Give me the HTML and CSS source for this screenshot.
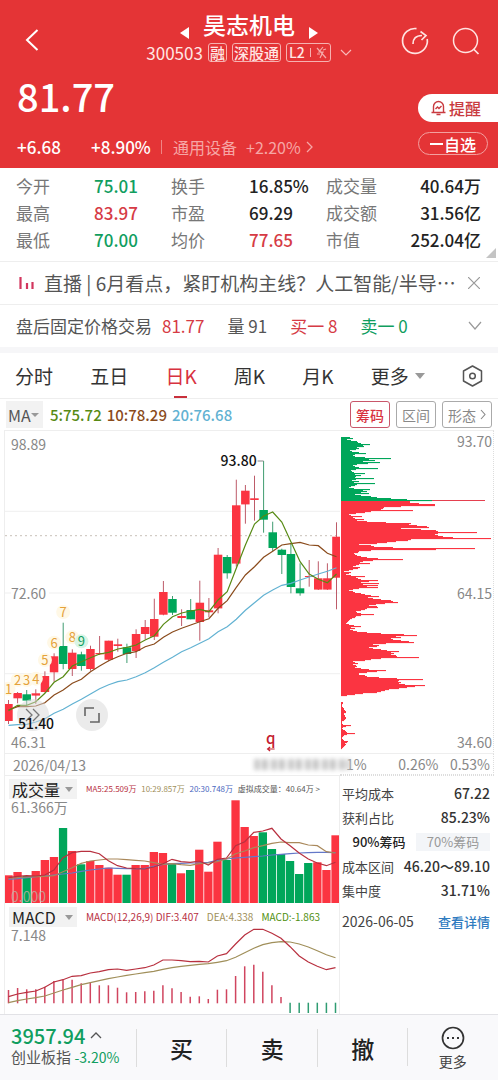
FILE: index.html
```
<!DOCTYPE html>
<html lang="zh-CN">
<head>
<meta charset="utf-8">
<meta name="viewport" content="width=device-width, initial-scale=1">
<title>昊志机电 300503</title>
<link rel="stylesheet" href="styles.css">
</head>
<body>
<div class="app">
  <header class="hero">
    <div class="topbar">
      <button class="icon-btn back" aria-label="返回"><svg width="14" height="24" viewBox="0 0 14 24"><path d="M12.500 2 2 12l10.500 10" fill="none" stroke="#fff" stroke-width="2"/></svg></button>
      <div class="title-block">
        <div class="title-row">
          <button class="icon-btn step" aria-label="上一只"><svg width="9" height="12" viewBox="0 0 9 12"><path d="M9 0v12L0 6z" fill="#fff"/></svg></button>
          <h1 class="title">昊志机电</h1>
          <button class="icon-btn step" aria-label="下一只"><svg width="9" height="12" viewBox="0 0 9 12"><path d="M0 0v12l9-6z" fill="#fff"/></svg></button>
        </div>
        <div class="code-row">
          <span class="code">300503</span>
          <span class="badge">融</span>
          <span class="badge">深股通</span>
          <span class="badge badge-l2">L2<i class="badge-sep"></i><svg width="11" height="13" viewBox="0 0 11 13"><path d="M7 1 3 6h4l-3 6M1 2l9 10M1 8h3M7 4l3-1" fill="none" stroke="#f5a9a9" stroke-width="1.200"/></svg></span>
          <svg width="12" height="7" viewBox="0 0 12 7"><path d="m1 1 5 5 5-5" fill="none" stroke="#f8b9b9" stroke-width="1.200"/></svg>
        </div>
      </div>
      <div class="top-actions">
        <button class="icon-btn" aria-label="分享"><svg width="28" height="28" viewBox="0 0 28 28"><path d="M15.500 1.600A12.400 12.400 0 1 0 26.200 12M12 17c0-5 2.500-8.500 9-8.500M19.500 4.500l5.500 4-4.500 4.500" fill="none" stroke="#ffe3e1" stroke-width="1.700"/></svg></button>
        <button class="icon-btn" aria-label="搜索"><svg width="28" height="28" viewBox="0 0 28 28"><circle cx="13.500" cy="13.500" r="12" fill="none" stroke="#ffe3e1" stroke-width="1.500"/><path d="m21.500 22 5 5" stroke="#ffe3e1" stroke-width="1.700"/></svg></button>
      </div>
    </div>
    <div class="quote">
      <div class="quote-main">
        <div class="price">81.77</div>
        <div class="change-row">
          <span class="delta">+6.68</span><span class="percent">+8.90%</span>
          <a class="sector" href="#sector"><span>通用设备</span><span>+2.20%</span><svg width="7" height="12" viewBox="0 0 7 12"><path d="m1 1 5 5-5 5" fill="none" stroke="#f6a6a5" stroke-width="1.300"/></svg></a>
        </div>
      </div>
      <div class="quote-actions">
        <button class="remind"><svg width="15" height="16" viewBox="0 0 15 16"><path d="M2.500 12V6.500a5 5 0 0 1 10 0V12M.500 12.500h14M5.500 14.500h4M4.500 9l2-2 1.500 1.500L10.500 6" fill="none" stroke="#c93b40" stroke-width="1.400"/></svg>提醒</button>
        <button class="watch"><i class="minus"></i>自选</button>
      </div>
    </div>
  </header>

  <dl class="stats">
    <div><dt>今开</dt><dd class="down">75.01</dd></div><div><dt>换手</dt><dd>16.85%</dd></div><div class="wide"><dt>成交量</dt><dd>40.64万</dd></div>
    <div><dt>最高</dt><dd class="up">83.97</dd></div><div><dt>市盈</dt><dd>69.29</dd></div><div class="wide"><dt>成交额</dt><dd>31.56亿</dd></div>
    <div><dt>最低</dt><dd class="down">70.00</dd></div><div><dt>均价</dt><dd class="up">77.65</dd></div><div class="wide"><dt>市值</dt><dd>252.04亿</dd></div>
  </dl>

  <div class="news">
    <svg width="16" height="12" viewBox="0 0 16 12"><path d="M1.500 0v12M8 6v6M13.500 5v7" stroke="#d2365e" stroke-width="2.200"/></svg>
    <a class="news-text" href="#live">直播 | 6月看点，紧盯机构主线？人工智能/半导…</a>
    <button class="icon-btn" aria-label="关闭"><svg width="12" height="12" viewBox="0 0 12 12"><path d="m0 0 12 12M12 0 0 12" stroke="#999" stroke-width="1.200"/></svg></button>
  </div>
  <div class="after-hours">
    <span>盘后固定价格交易</span><span class="up ah-price">81.77</span><span class="ah-vol">量 91</span><span class="up ah-buy">买一 8</span><span class="down">卖一 0</span>
    <button class="icon-btn ah-more" aria-label="展开"><svg width="14" height="9" viewBox="0 0 14 9"><path d="m1 1 6 7 6-7" fill="none" stroke="#999" stroke-width="1.200"/></svg></button>
  </div>

  <nav class="tabs">
    <button>分时</button><button>五日</button><button class="active">日K</button><button>周K</button><button>月K</button><button class="tab-more">更多<i class="caret"></i></button>
    <button class="tab-set" aria-label="设置"><svg width="21" height="22" viewBox="0 0 21 22"><path d="M10.500 1 19.500 6v10l-9 5-9-5V6z" fill="none" stroke="#555" stroke-width="1.500" stroke-linejoin="round"/><circle cx="10.500" cy="11" r="2.800" fill="none" stroke="#555" stroke-width="1.500"/></svg></button>
  </nav>

  <div class="ma-row">
    <button class="ma-pick">MA<i class="caret small"></i></button>
    <span class="ma5">5:75.72</span><span class="ma10">10:78.29</span><span class="ma20">20:76.68</span>
    <div class="ma-tools"><button class="selected">筹码</button><button>区间</button><button>形态<svg width="6" height="11" viewBox="0 0 6 11"><path d="m1 1 4 4.500-4 4.500" fill="none" stroke="#888" stroke-width="1.100"/></svg></button></div>
  </div>

  <main class="charts">
    <section class="kline">
      <svg class="plot" id="kline"></svg>
      <span class="axis axis-high">98.89</span><span class="axis axis-mid">72.60</span><span class="axis axis-low">46.31</span>
      <button class="round-btn skip" aria-label="前进"><svg width="16" height="14" viewBox="0 0 16 14"><path d="m1 1 6 6-6 6M8 1l6 6-6 6" fill="none" stroke="#777" stroke-width="1.300"/></svg></button>
      <span class="low-label">51.40</span>
      <button class="round-btn expand" aria-label="全屏"><svg width="16" height="16" viewBox="0 0 16 16"><path d="M1 9V1h9M15 6v9H6" fill="none" stroke="#666" stroke-width="1.600"/></svg></button>
    </section>
    <section class="chips">
      <svg class="plot" id="chips"></svg>
      <span class="axis axis-high">93.70</span><span class="axis axis-mid">64.15</span><span class="axis axis-low">34.60</span>
    </section>
    <div class="date-row"><span>2026/04/13</span><i class="smear"></i></div>
    <div class="scale-row"><span>1%</span><span>0.26%</span><span>0.53%</span></div>
    <div class="indicators">
      <section class="volume">
        <svg class="plot" id="volume"></svg>
        <div class="ind-head"><button class="ind-pick">成交量<i class="caret"></i></button><div class="legend vol-legend"><span class="l-red">MA5:25.509万</span><span class="l-tan">10:29.857万</span><span class="l-blue">20:30.748万</span><span>虚拟成交量：40.64万 &gt;</span></div></div>
        <span class="ind-max">61.366万</span>
        <span class="ind-zero">0.000</span>
      </section>
      <section class="macd">
        <svg class="plot" id="macd"></svg>
        <div class="ind-head"><button class="ind-pick">MACD<i class="caret"></i></button><div class="legend macd-legend"><span class="l-red">MACD(12,26,9) DIF:3.407</span><span class="l-tan">DEA:4.338</span><span class="l-green">MACD:-1.863</span></div></div>
        <span class="ind-max">7.148</span>
      </section>
    </div>
    <aside class="chip-info">
      <div class="info"><span>平均成本</span><b>67.22</b></div>
      <div class="info"><span>获利占比</span><b>85.23%</b></div>
      <div class="segment"><button class="on">90%筹码</button><button>70%筹码</button></div>
      <div class="info"><span>成本区间</span><b>46.20～89.10</b></div>
      <div class="info"><span>集中度</span><b>31.71%</b></div>
      <div class="info info-date"><span>2026-06-05</span><a href="#detail">查看详情</a></div>
    </aside>
  </main>

  <footer class="trade-bar">
    <button class="index"><span class="index-value">3957.94<svg width="12" height="7" viewBox="0 0 12 7"><path d="m1 6 5-5 5 5" fill="none" stroke="#555" stroke-width="1.300"/></svg></span><span class="index-name">创业板指 <em>-3.20%</em></span></button>
    <button class="trade">买</button><button class="trade">卖</button><button class="trade">撤</button>
    <button class="more"><svg width="24" height="24" viewBox="0 0 24 24"><circle cx="12" cy="12" r="10.500" fill="none" stroke="#333" stroke-width="1.700"/><path d="M6 11h2v2H6zM11 11h2v2h-2zM16 11h2v2h-2z" fill="#333"/></svg>更多</button>
  </footer>
</div>
<script src="charts.js"></script>
</body>
</html>
```
FILE: styles.css
```
* { box-sizing: border-box; }
body { margin: 0; background: #fff; color: #222; font-family: "Noto Sans CJK SC", sans-serif; font-size: 17px; line-height: 1; }
button { font: inherit; color: inherit; background: none; border: 0; padding: 0; margin: 0; }
a { color: inherit; text-decoration: none; }
svg { display: block; flex: none; }
.app { display: flex; flex-direction: column; min-height: 100vh; }
.up { color: #d63b45; }
.down { color: #119e5f; }
.caret { display: inline-block; border: 5px solid transparent; border-top: 6px solid #999; border-bottom: 0; }
.caret.small { border-width: 4px; border-top-width: 4px; border-bottom: 0; }

/* header */
.hero { background: #e43436; color: #fff; height: 168px; }
.topbar { display: grid; grid-template-columns: 1fr auto 1fr; align-items: center; padding: 12px 18px 0; }
.back { justify-self: start; margin-left: 7px; padding-top: 6px; }
.title-row { display: flex; justify-content: center; gap: 14px; height: 24px; }
.title { margin: 0; font-size: 23px; line-height: 24px; font-weight: 500; }
.step { padding-top: 15px; height: 27px; }
.code-row { display: flex; align-items: center; gap: 5px; margin-top: 6px; height: 20px; color: #ffe6e4; }
.code { font-size: 17px; }
.badge { border: 1px solid #f6b1b0; border-radius: 3px; height: 19px; padding: 0 1px; font-size: 15px; line-height: 17px; font-weight: 500; }
.badge-l2 { display: flex; align-items: center; gap: 5px; font-size: 14px; padding: 0 3px 0 2px; margin-right: 4px; }
.badge-sep { width: 1px; height: 9px; background: #f6b1b0; }
.top-actions { display: flex; justify-content: flex-end; gap: 23px; padding-top: 7px; }
.quote { display: flex; justify-content: space-between; }
.quote-main { padding: 15px 0 0 17px; }
.price { font-size: 38px; line-height: 38px; font-weight: 500; }
.change-row { display: flex; align-items: center; font-size: 17px; line-height: 20px; font-weight: 500; margin-top: 22px; }
.delta { width: 74px; }
.percent { width: 70px; }
.sector { display: flex; align-items: center; gap: 9px; color: #f6a6a5; border-left: 1px solid #f08484; padding-left: 11px; font-size: 16px; font-weight: 400; line-height: 14px; }
.sector svg { margin-left: -4px; }
.quote-actions { display: flex; flex-direction: column; gap: 10px; padding-top: 32px; width: 80px; }
.remind { display: flex; align-items: center; gap: 3px; height: 28px; padding-left: 13px; border-radius: 14px 0 0 14px; background: #fff; color: #c93b40; font-size: 16px; font-weight: 500; }
.watch { display: flex; align-items: center; justify-content: center; gap: 1px; width: 70px; height: 23px; border: 1px solid #f3a09f; border-radius: 12px; font-size: 16px; font-weight: 500; }
.minus { width: 13px; height: 2px; background: #fff; }

/* key figures */
.stats { position: relative; display: grid; grid-template-columns: repeat(3, 1fr); row-gap: 1px; margin: 0; padding: 5px 17px 8px 16px; border-bottom: 1px solid #eee; }
.stats > div { display: flex; line-height: 26px; }
.stats dt { width: 78px; color: #777; }
.stats dd { margin: 0; font-weight: 500; }
.stats .wide { justify-content: space-between; }
.stats .wide dt { width: auto; }
.stats::after { content: ""; position: absolute; right: 2px; bottom: 3px; border: 5px solid #c4c4c4; border-top-color: transparent; border-left-color: transparent; }
.news { display: flex; align-items: center; height: 43px; padding: 0 18px 0 19px; border-bottom: 1px solid #eee; color: #555; }
.news-text { flex: 1; min-width: 0; margin-left: 9px; font-size: 19px; line-height: 28px; white-space: nowrap; overflow: hidden; }
.after-hours { display: flex; align-items: center; height: 42px; padding: 0 16px; color: #555; border-bottom: 1px solid #fff; white-space: nowrap; }
.ah-price { margin-left: 10px; }
.ah-vol { margin-left: 23px; }
.ah-buy { margin: 0 23px 0 23px; }
.ah-more { margin-left: auto; }

/* period tabs */
.tabs { display: flex; align-items: center; justify-content: space-between; height: 52px; border-top: 6px solid #f6f6f8; border-bottom: 1px solid #eee; padding: 0 15px; font-size: 19px; color: #333; }
.tabs button { position: relative; line-height: 44px; height: 44px; }
.tabs .active { color: #d8323f; }
.tabs .active::after { content: ""; position: absolute; left: 9px; bottom: 0; width: 13px; height: 2px; background: #c9303c; }
.tabs .tab-more { display: flex; align-items: center; gap: 6px; }
.tabs .tab-set { display: flex; align-items: center; }
.ma-row { display: flex; align-items: center; height: 31px; padding: 0 6px; font-size: 15px; }
.ma-pick { display: flex; align-items: center; width: 37px; height: 27px; padding-left: 2px; background: #f2f2f2; color: #555; font-size: 16px; }
.ma5 { color: #578a14; margin-left: 7px; font-weight: 500; }
.ma10 { color: #8a4b1c; margin-left: 5px; font-weight: 500; }
.ma20 { color: #62b2d2; margin-left: 5px; font-weight: 500; }
.ma-tools { display: flex; gap: 6px; margin-left: auto; font-size: 14px; color: #888; }
.ma-tools button { display: flex; align-items: center; gap: 4px; height: 27px; padding: 0 5px; border: 1px solid #aaa; border-radius: 3px; }
.ma-tools .selected { color: #d8323f; border-color: #c9566a; font-weight: 500; }

/* charts */
.charts { display: grid; grid-template-columns: minmax(0, 1fr) 154px; padding: 0 4px; flex: 1; }
.kline, .chips { position: relative; height: 324px; border: 1px solid #eee; border-right: 0; }
.chips { border-left: 0; border-right: 1px dotted #ddd; }
.plot { position: absolute; inset: 0; width: 100%; height: 100%; }
.axis { position: absolute; left: 6px; font-size: 14px; line-height: 14px; color: #888; }
.chips .axis { left: auto; right: 1px; }
.axis-high { top: 6px; }
.chips .axis-high { top: 3px; }
.axis-mid { top: 155px; }
.axis-low { bottom: 4px; }
.kline .axis-mid { background: #fff; padding-right: 3px; }
.round-btn { position: absolute; display: grid; place-items: center; width: 32px; height: 32px; border-radius: 16px; background: rgba(215, 215, 215, .500); }
.skip { left: 12px; top: 268px; }
.expand { left: 71px; top: 268px; }
.low-label { position: absolute; left: 13px; top: 285px; font-size: 14px; line-height: 14px; color: #111; font-weight: 500; }
.date-row, .scale-row { position: relative; display: flex; align-items: center; height: 21px; font-size: 14px; color: #888; }
.date-row { padding-left: 8px; border-left: 1px solid #eee; }
.scale-row { justify-content: space-between; padding: 0 3px 0 6px; border-right: 1px dotted #ddd; border-bottom: 1px dotted #ddd; }
.scale-row span:nth-child(2) { margin-left: 20px; }
.smear { position: absolute; right: -10px; top: 5px; width: 96px; height: 11px; filter: blur(2px); background: repeating-linear-gradient(90deg, #ccc 0 6px, #eee 6px 9px, #bbb 9px 13px, #f4f4f4 13px 17px); z-index: 1; }
.indicators { border-left: 1px solid #eee; border-right: 1px solid #eee; }
.volume { position: relative; height: 129px; padding: 3px 0 0 4px; border-top: 1px solid #eee; }
.macd { position: relative; height: 110px; padding: 3px 0 0 4px; }
.ind-head { position: relative; display: flex; align-items: center; }
.ind-pick { display: flex; align-items: center; justify-content: space-between; width: 68px; height: 20px; padding: 0 4px 0 3px; background: #f2f2f2; font-size: 16px; }
.ind-pick .caret { border-width: 4px; border-top-width: 5px; border-bottom: 0; }
.legend { display: flex; flex: 1; justify-content: space-between; padding: 0 19px 0 9px; white-space: nowrap; color: #555; }
.vol-legend { font-size: 8px; }
.macd-legend { font-size: 10px; }
.l-red { color: #b8303f; }
.l-tan { color: #a08f5a; }
.l-blue { color: #4a67c0; }
.l-green { color: #4f8f10; }
.ind-max { position: relative; display: block; padding: 0 2px; font-size: 14px; line-height: 16px; color: #888; }
.ind-zero { position: absolute; left: 6px; bottom: 1px; font-size: 14px; color: rgba(190, 175, 160, .800); }
.chip-info { padding: 5px 4px 0 2px; font-size: 13px; color: #444; border-top: 1px dotted #ddd; }
.info { display: flex; align-items: center; justify-content: space-between; height: 24px; white-space: nowrap; }
.info b { font-size: 14px; font-weight: 500; color: #333; }
.info a { color: #2f7bbf; font-size: 13px; font-weight: 500; }
.info-date { margin-top: 7px; font-size: 14px; }
.segment { display: grid; grid-template-columns: 1fr 1fr; height: 25px; align-items: center; }
.segment button { height: 18px; color: #999; background: #f3f5f8; }
.segment .on { color: #222; background: none; font-weight: 500; }

/* trade bar */
.trade-bar { display: grid; grid-template-columns: 3fr 2fr 2fr 2fr 2fr; height: 67px; background: #f9f9fb; border-top: 1px solid #e2e2e6; align-items: center; }
.index { display: flex; flex-direction: column; align-items: flex-start; gap: 1px; padding: 0 0 4px 11px; white-space: nowrap; }
.index-value { display: flex; align-items: center; gap: 5px; color: #119e5f; font-size: 20px; line-height: 21px; font-weight: 500; }
.index-name { font-size: 15px; line-height: 19px; color: #555; }
.index-name em { font-style: normal; font-size: 14px; color: #119e5f; }
.trade { font-size: 23px; height: 38px; border-left: 1px solid #ddd; font-weight: 500; }
.more { display: flex; flex-direction: column; align-items: center; gap: 2px; font-size: 14px; line-height: 18px; color: #444; position: relative; }
.more::before { content: ""; position: absolute; left: 0; top: 2px; height: 38px; border-left: 1px solid #ddd; }
```
FILE: charts.js
```
const RED = '#fb3441';
const GREEN = '#00a65a';
const COUNT = 37;

// candle: direction, high, open/close top, open/close bottom, low (thirds of a pixel from the plot top)
const candles = [
  ['r',810,822,873,882],['r',786,789,805,820],['g',780,793,812,825],['r',778,790,797,822],
  ['r',724,738,786,788],['r',670,679,727,755],['g',578,648,702,718],['r',658,668,717,738],
  ['g',665,673,708,722],['r',647,657,717,722],['r',618,669,673,675],['r',632,632,689,694],
  ['r',626,643,648,665],['g',641,652,672,699],['r',598,612,663,684],['r',570,591,612,628],
  ['r',506,567,620,630],['r',453,486,554,556],['g',498,507,548,555],['r',538,558,564,588],
  ['g',507,540,568,568],['r',452,518,576,632],['r',504,541,547,562],['r',354,374,535,550],
  ['g',375,381,430,446],['r',149,226,401,410],['r',165,182,223,281],['r',137,205,210,272],
  ['g',93,240,269,308],['g',275,307,354,364],['g',356,359,375,432],['g',340,372,471,490],
  ['g',400,475,490,497],['r',390,438,441,470],['r',394,445,479,480],['r',400,445,479,480],
  ['r',277,320,443,538]
];
const ma5 = [842,826,826,815,790,757,740,708,695,683,672,667,657,652,645,630,617,583,560,549,543,538,545,510,485,415,345,282,258,246,276,335,395,432,448,458,432];
const ma10 = [840,830,830,828,818,795,780,760,748,725,708,692,680,670,665,650,642,622,606,595,585,575,566,535,512,472,435,410,382,364,345,341,337,345,347,370,380];
const ma20 = [886,884,883,876,866,850,838,822,808,792,776,764,755,750,740,728,713,697,682,665,653,640,626,605,590,568,541,518,496,480,466,460,450,441,432,424,413];

const volumes = [301,291,303,288,255,246,159,228,268,258,270,278,299,299,270,270,231,234,264,295,285,224,290,200,255,76,156,183,172,222,237,258,297,264,262,285,181];
const volumeUp = 'rrgrrrgrgrrrrgrrrrgrgrrrgrrrggggggrrr';
const vol5 = [308,304,302,303,300,285,248,233,229,229,236,257,272,279,281,282,276,266,253,260,262,258,270,253,249,212,200,172,168,160,192,212,234,252,264,272,262];
const vol10 = [310,308,306,305,304,302,290,278,265,258,255,252,252,254,256,258,263,268,266,269,271,266,264,260,252,236,228,218,212,205,201,203,203,210,212,230,234];
const vol20 = [313,311,308,305,303,300,297,294,289,285,282,279,280,281,281,281,274,268,266,265,264,264,262,256,252,249,247,245,243,240,238,236,234,233,232,232,233];

const dif = [290,282,277,273,262,246,239,229,227,219,215,209,207,211,207,203,195,180,180,182,185,184,186,168,161,132,105,88,88,100,115,140,168,186,199,209,203];
const dea = [308,302,297,293,288,279,270,262,254,248,242,236,231,226,222,218,214,208,203,199,196,193,191,187,182,172,158,145,134,128,125,126,132,141,152,164,173];
const hist = [270,264,268,268,260,243,240,239,250,248,256,256,263,277,276,274,272,256,265,276,290,289,297,269,268,228,199,194,215,256,291];

// holders per price level, one row per pixel
const chipRows = [
  9,12,6,10,16,17,20,29,22,23,16,18,15,9,11,18,25,14,12,14,24,50,28,34,22,39,27,16,12,14,18,37,15,10,11,13,24,14,20,15,14,33,15,11,18,13,34,16,14,10,8,13,29,22,26,20,28,14,20,30,36,50,66,91,
  69,69,78,94,94,60,43,42,40,72,30,24,15,8,10,21,12,14,23,16,26,45,70,68,76,86,88,60,80,95,97,136,97,94,97,102,112,150,70,67,55,46,36,18,30,33,52,134,95,30,18,17,13,14,16,20,26,37,62,32,22,19,29,18,15,12,19,17,12,8,3,10,8,5,10,24,15,17,20,37,28,20,38,22,37,26,37,18,12,8,12,14,20,24,30,38,27,32,40,50,
  52,57,44,35,28,36,37,26,24,20,15,16,20,33,20,15,14,11,9,8,7,6,5,8,13,20,10,14,9,12,16,26,40,63,76,55,60,50,52,60,68,73,45,32,38,36,28,32,40,46,58,50,53,50,55,56,78,40,30,24,12,14,17,12,15,16,14,20,28,45,36,26,18,18,24,26,38,56,82,58,57,60,58,64,84,74,66,58,48,44,40,36,22,14,6,
  0,0,0,0,0,0,2,2,1,1,1,2,3,3,4,5,5,3,3,4,4,5,5,4,3,1,1,1,2,10,5,2,1,2,4,5,6,14,6,3,2,1,1,2,3,7,6,4,5,4,3,2,1
];

const rect = (x, y, w, h, fill) => `<rect x="${x.toFixed(1)}" y="${y.toFixed(1)}" width="${w.toFixed(1)}" height="${h.toFixed(1)}" fill="${fill}"/>`;
const segment = (x1, y1, x2, y2, stroke, extra = '') => `<path d="M${x1.toFixed(1)} ${y1.toFixed(1)}L${x2.toFixed(1)} ${y2.toFixed(1)}" stroke="${stroke}" ${extra}/>`;

function draw(id, build) {
  const svg = document.getElementById(id);
  const width = svg.clientWidth;
  const step = (width - 7) / (COUNT - 1);
  const x = i => 3.500 + i * step;
  const line = (values, y, color) => `<polyline fill="none" stroke="${color}" stroke-width="1.200" points="${values.map((v, i) => x(i).toFixed(1) + ',' + y(v).toFixed(1)).join(' ')}"/>`;
  svg.innerHTML = build({ width, x, step, line });
}

function render() {
  draw('kline', ({ width, x, step, line }) => {
    const y = v => v / 3 - 1;
    let out = '';
    for (const g of [244, 489, 731]) out += segment(0, y(g), width, y(g), '#efefef');
    out += segment(0, y(317), width, y(317), '#c8c0b8', 'stroke-dasharray="2 3"');
    candles.forEach(([d, high, top, bottom, low], i) => {
      const color = d === 'r' ? RED : GREEN;
      out += segment(x(i), y(high), x(i), y(low), d === 'r' ? '#bd5b69' : '#3f9c70');
      out += rect(x(i) - step / 2 + .3, y(top), step - .6, (bottom - top) / 3, color);
    });
    out += line(ma20, y, '#62b2d2') + line(ma10, y, '#8a4b1c') + line(ma5, y, '#578a14');
    const marks = [776, 750, 750, 746, 690, 638, 546, 622, 634];
    marks.forEach((v, i) => {
      const last = i === 8;
      out += `<circle cx="${x(i)}" cy="${y(v)}" r="7" fill="${last ? '#d9f5e6' : '#fff8e6'}"/>`;
      out += `<text x="${x(i)}" y="${y(v) + 5}" text-anchor="middle" font-size="13" fill="${last ? '#119e5f' : '#e5a23a'}">${i + 1}</text>`;
    });
    out += `<text x="${x(28) - 7}" y="35" text-anchor="end" font-size="14" font-weight="500" fill="#111">93.80</text>`;
    out += segment(x(28) - 6, 30, x(28), 30, '#888');
    out += `<text x="${x(28) + 7}" y="313" text-anchor="middle" font-size="15" font-weight="500" fill="#c4202f">q</text>`;
    out += `<path d="M${x(28) + 11} 318h-7m2.500-2-2.500 2 2.500 2" fill="none" stroke="#c4202f" stroke-width="1.200"/>`;
    return out;
  });

  draw('chips', () => {
    let out = rect(1, 69, 144, 1, '#e5404f');
    chipRows.forEach((w, i) => { if (w) out += rect(1, 6 + i, w, 1.1, i < 64 ? GREEN : RED); });
    return out;
  });

  draw('volume', ({ x, step, line }) => {
    const y = v => v / 3 - 1;
    let out = '';
    volumes.forEach((v, i) => { out += rect(x(i) - step / 2 + .4, y(v), step - .8, (384 - v) / 3, volumeUp[i] === 'r' ? RED : GREEN); });
    return out + line(vol20, y, '#6478c8') + line(vol10, y, '#a9885a') + line(vol5, y, '#b8303f');
  });

  draw('macd', ({ x, line }) => {
    const y = v => v / 3 - 4;
    let out = '';
    for (let i = 0; i < COUNT; i++) {
      out += i < hist.length
        ? segment(x(i), y(hist[i]), x(i), y(310), '#d0455f', 'stroke-width="1.500"')
        : segment(x(i), y(308), x(i), y(339), '#2f9c72', 'stroke-width="1.500"');
    }
    return out + line(dea, y, '#a08f5a') + line(dif, y, '#b8303f');
  });
}

render();
window.addEventListener('resize', render);
```
